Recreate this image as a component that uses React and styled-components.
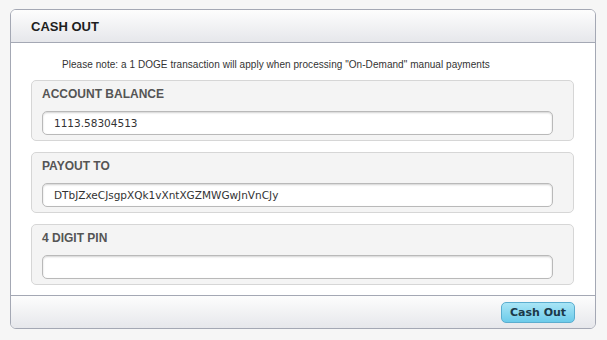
import React, { useState } from 'react';
import styled, { createGlobalStyle } from 'styled-components';

const GlobalStyle = createGlobalStyle`
  html, body {
    margin: 0;
    padding: 0;
    background: #f6f6f6;
  }
  body {
    font-family: "Liberation Sans", Arial, sans-serif;
  }
`;

const Panel = styled.section`
  width: 584px;
  margin: 9px 0 0 10px;
  border: 1px solid #a4a8b4;
  border-radius: 6px;
  background: #fff;
  overflow: hidden;
`;

const Header = styled.header`
  height: 32px;
  display: flex;
  align-items: center;
  padding-left: 20px;
  background: linear-gradient(#fdfdfd, #e6e7eb);
  border-bottom: 1px solid #a4a8b4;

  h2 {
    margin: 0;
    font-size: 13px;
    font-weight: bold;
    color: #1e1e1e;
  }
`;

const Note = styled.p`
  margin: 0;
  padding: 16px 0 10px 51px;
  font-size: 10px;
  letter-spacing: 0.05px;
  color: #333;
`;

const Fields = styled.div`
  display: flex;
  flex-direction: column;
  gap: 11px;
  padding: 0 21px 10px 20px;
`;

const Fieldset = styled.div`
  height: 59px;
  border: 1px solid #d6d6d6;
  border-radius: 5px;
  background: #f4f4f4;
  padding: 0 20px 0 10px;
  display: flex;
  flex-direction: column;

  label {
    margin-top: 6px;
    height: 14px;
    font-size: 12px;
    font-weight: bold;
    color: #555;
  }
`;

const Input = styled.input`
  box-sizing: border-box;
  margin-top: 10px;
  width: 100%;
  height: 24px;
  border: 1px solid #b9b9b9;
  border-radius: 5px;
  background: #fff;
  box-shadow: inset 0 1px 2px rgba(0, 0, 0, 0.18);
  padding: 0 11px;
  font-family: "DejaVu Sans", sans-serif;
  font-size: 10.5px;
  color: #333;
  outline: none;
`;

const Footer = styled.footer`
  height: 32px;
  display: flex;
  align-items: center;
  justify-content: flex-end;
  padding-right: 20px;
  border-top: 1px solid #a4a8b4;
  background: linear-gradient(#fdfdfd, #e6e7eb);
`;

const Button = styled.button`
  width: 74px;
  height: 21px;
  margin-top: 1px;
  border: 1px solid #5badcf;
  border-radius: 5px;
  background: linear-gradient(#a9e5f6, #6ccbea);
  color: #1b3848;
  font-family: "DejaVu Sans", sans-serif;
  font-size: 11px;
  font-weight: bold;
  cursor: pointer;
  padding: 0;
`;

const fields = [
  { id: 'balance', label: 'ACCOUNT BALANCE', value: '1113.58304513' },
  { id: 'payout', label: 'PAYOUT TO', value: 'DTbJZxeCJsgpXQk1vXntXGZMWGwJnVnCJy' },
  { id: 'pin', label: '4 DIGIT PIN', value: '' },
];

function App() {
  const [values, setValues] = useState(
    Object.fromEntries(fields.map((f) => [f.id, f.value]))
  );

  return (
    <>
      <GlobalStyle />
      <Panel>
        <Header>
          <h2>CASH OUT</h2>
        </Header>
        <Note>
          Please note: a 1 DOGE transaction will apply when processing "On-Demand" manual payments
        </Note>
        <Fields>
          {fields.map((f) => (
            <Fieldset key={f.id}>
              <label htmlFor={f.id}>{f.label}</label>
              <Input
                id={f.id}
                type={f.id === 'pin' ? 'password' : 'text'}
                value={values[f.id]}
                onChange={(e) => setValues({ ...values, [f.id]: e.target.value })}
              />
            </Fieldset>
          ))}
        </Fields>
        <Footer>
          <Button type="button">Cash Out</Button>
        </Footer>
      </Panel>
    </>
  );
}

export default App;
